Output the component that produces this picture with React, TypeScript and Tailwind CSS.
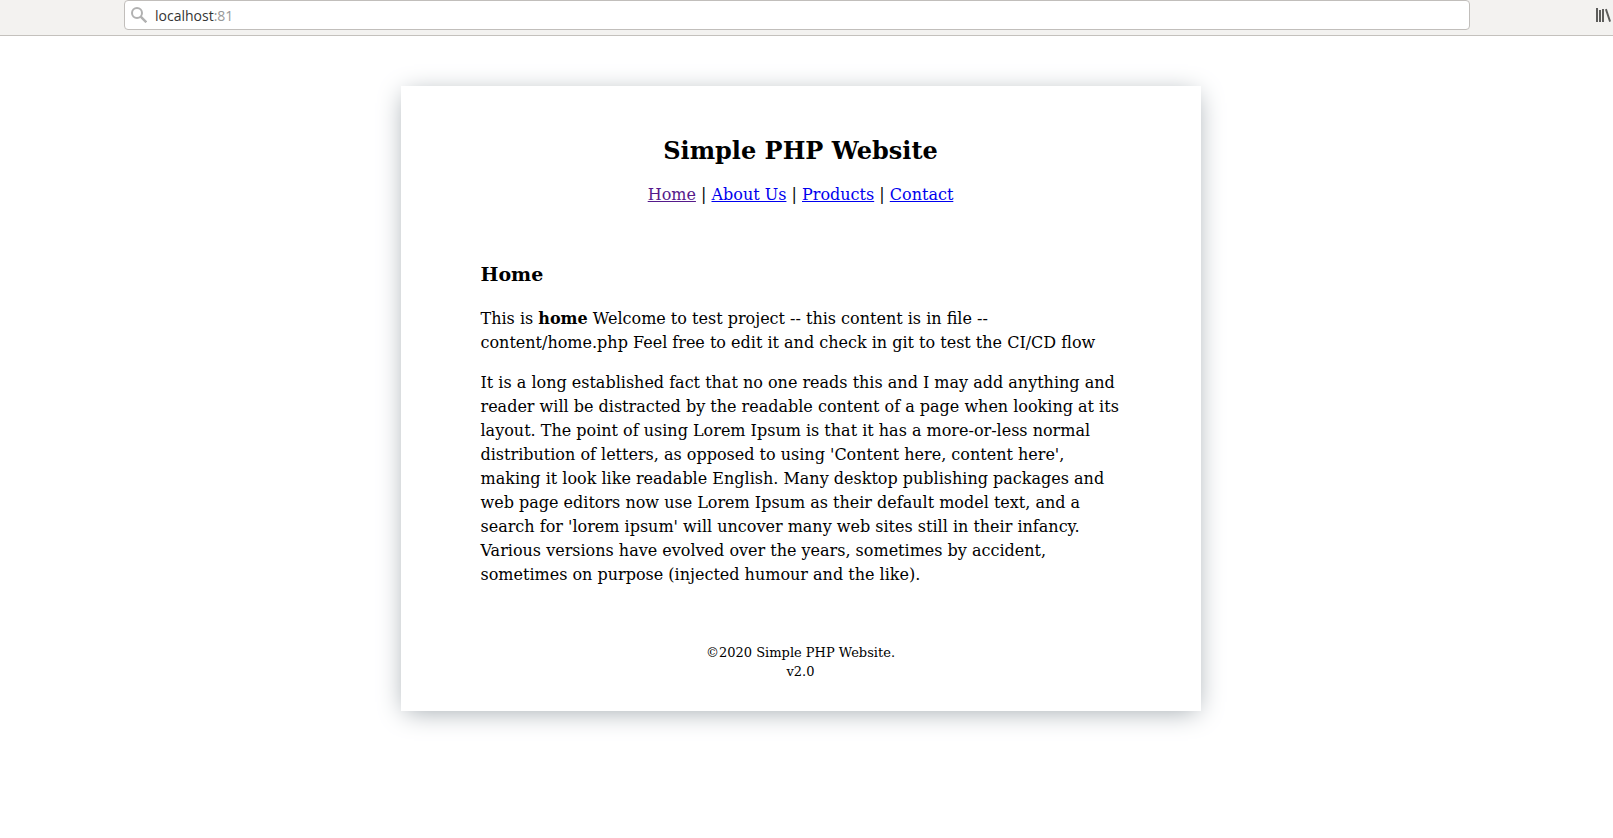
import React from "react";

const links = [
  { label: "Home", visited: true },
  { label: "About Us", visited: false },
  { label: "Products", visited: false },
  { label: "Contact", visited: false },
];

function SearchIcon() {
  return (
    <svg viewBox="0 0 16 16" className="h-4 w-4 shrink-0" fill="none" stroke="#b1b1b1" strokeWidth="2" aria-hidden="true">
      <circle cx="6" cy="6" r="5" />
      <path d="M9.7 9.7 15.3 15.3" strokeWidth="2.4" />
    </svg>
  );
}

function LibraryIcon() {
  return (
    <svg viewBox="0 0 16 14" className="h-3.5 w-4 shrink-0" fill="#5d5d5b" aria-hidden="true">
      <path d="M0 0h2v14H0zM3 2h2v12H3zM6 1h2v13H6zM9 1.4l1.8-.6L15 13.3l-1.8.7z" />
    </svg>
  );
}

function BrowserBar() {
  return (
    <header className="flex h-9 items-start border-b border-[#c4c1bd] bg-[#f3f2f0] pl-31">
      <label className="flex h-[30px] flex-1 items-center gap-2 rounded border border-[#c1bebb] bg-white px-1.5 font-['Open_Sans',sans-serif] text-sm">
        <SearchIcon />
        <span className="relative flex-1 pt-0.5">
          <input
            aria-label="Address"
            defaultValue="localhost:81"
            className="block w-full bg-transparent text-transparent caret-black outline-none"
          />
          <span aria-hidden="true" className="pointer-events-none absolute inset-0 pt-0.5 text-[#343434]">
            localhost<span className="text-[#989898]">:81</span>
          </span>
        </span>
      </label>
      <button type="button" aria-label="Library" className="ml-[126px] flex h-[30px] w-[17px] items-center">
        <LibraryIcon />
      </button>
    </header>
  );
}

export default function App() {
  return (
    <div className="min-h-screen bg-white font-['DejaVu_Serif',serif] text-base leading-6 text-black">
      <BrowserBar />
      <div className="pr-3">
        <div className="mx-auto mt-[50px] max-w-[800px] px-10 py-[30px] text-center shadow-[0_4px_25px_-4px_#9da5ab]">
          <h2 className="mt-[23px] mb-5 text-2xl leading-6 font-bold">Simple PHP Website</h2>
          <nav>
            {links.map((link, i) => (
              <React.Fragment key={link.label}>
                {i > 0 && " | "}
                <a href="#" className={link.visited ? "text-[#551a8b] underline" : "text-[#0000ee] underline"}>
                  {link.label}
                </a>
              </React.Fragment>
            ))}
          </nav>
          <article className="px-10 pt-[34px] pb-10 text-left">
            <h3 className="my-[19px] text-[19px] leading-7 font-bold">Home</h3>
            <p className="my-4">
              This is <b>home</b> Welcome to test project -- this content is in file -- content/home.php Feel free to
              edit it and check in git to test the CI/CD flow
            </p>
            <p className="my-4">
              It is a long established fact that no one reads this and I may add anything and reader will be distracted
              by the readable content of a page when looking at its layout. The point of using Lorem Ipsum is that it
              has a more-or-less normal distribution of letters, as opposed to using 'Content here, content here',
              making it look like readable English. Many desktop publishing packages and web page editors now use Lorem
              Ipsum as their default model text, and a search for 'lorem ipsum' will uncover many web sites still in
              their infancy. Various versions have evolved over the years, sometimes by accident, sometimes on purpose
              (injected humour and the like).
            </p>
          </article>
          <footer className="text-[13px] leading-[19px]">
            ©2020 Simple PHP Website.
            <br />
            v2.0
          </footer>
        </div>
      </div>
    </div>
  );
}
